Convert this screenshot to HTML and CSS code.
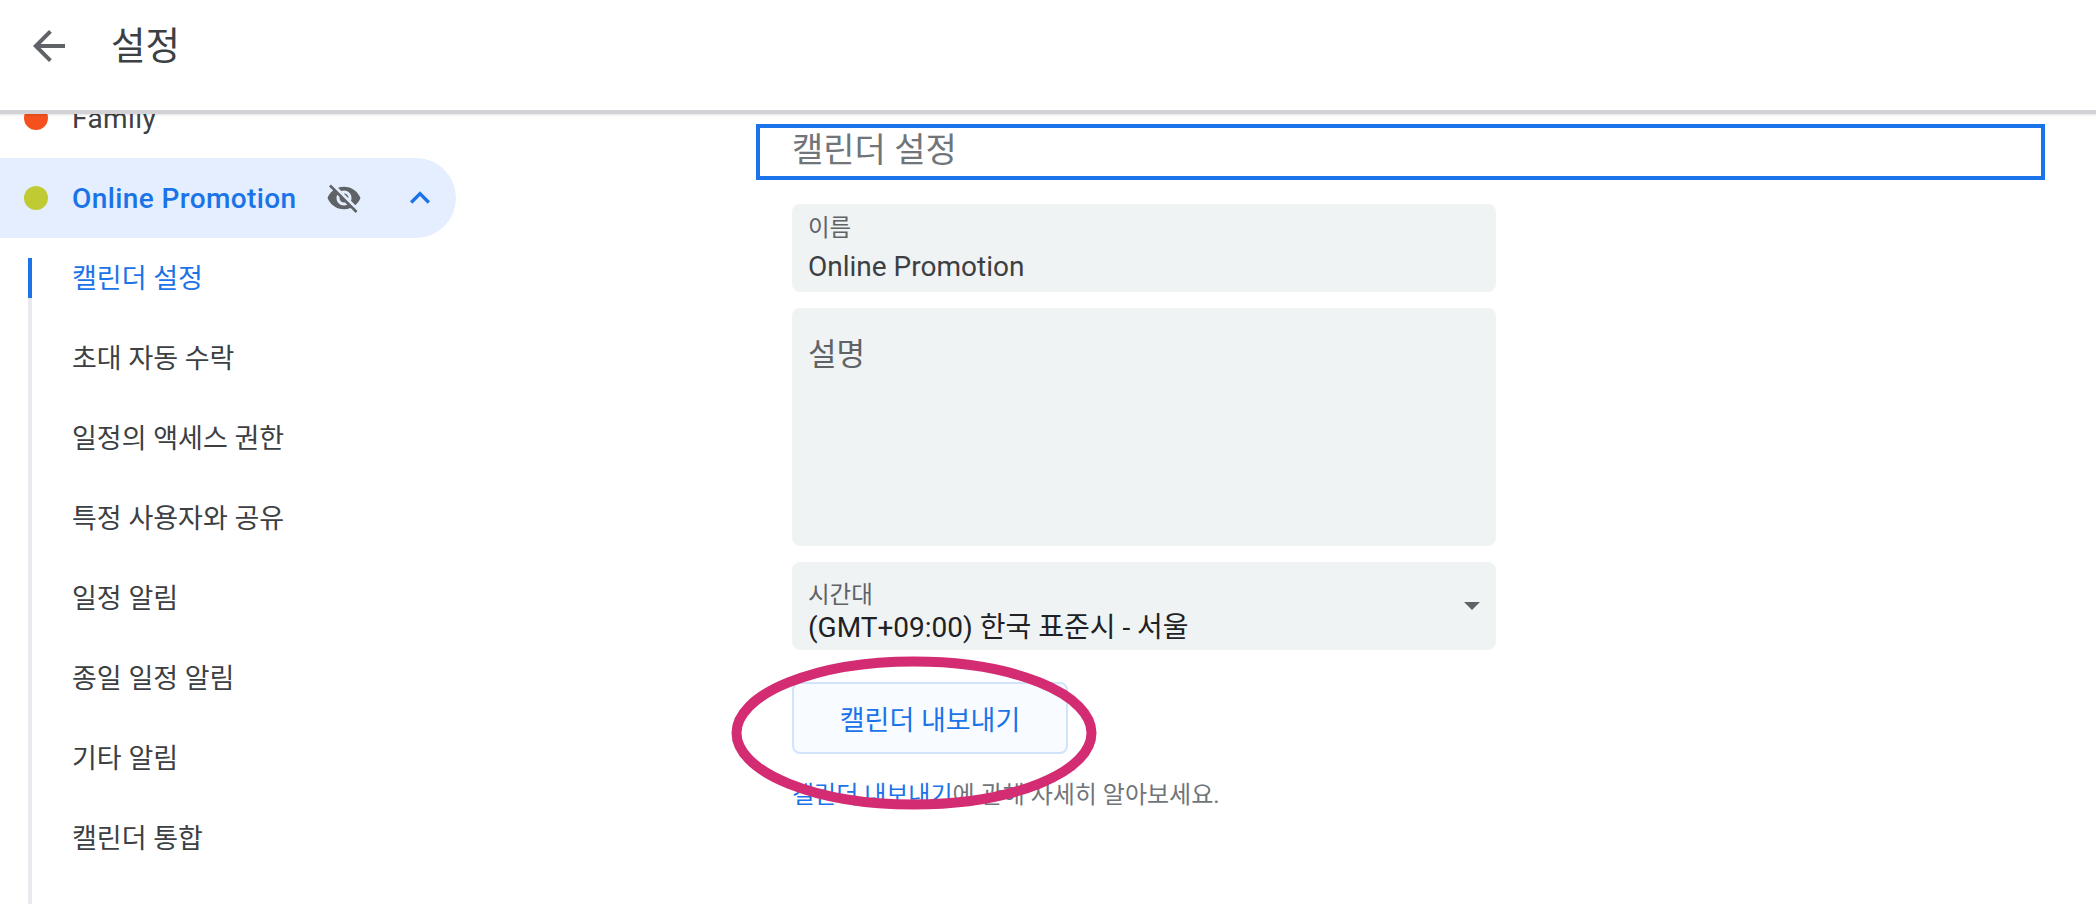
FILE: index.html
```html
<!DOCTYPE html>
<html lang="ko">
<head>
    <meta charset="utf-8">
    <title>설정</title>
    <link rel="stylesheet" href="styles.css">
</head>
<body>
    <div class="header">
        <svg class="back-icon" viewBox="0 0 24 24"><path d="M20 11H7.83l5.59-5.59L12 4l-8 8 8 8 1.41-1.41L7.83 13H20v-2z"/></svg>
        <h1>설정</h1>
    </div>

    <div class="content">
        <div class="sidebar">
            <div class="calendar-row">
                <span class="dot dot-family"></span>
                <span class="calendar-name">Family</span>
            </div>
            <div class="calendar-row active">
                <span class="dot dot-promo"></span>
                <span class="calendar-name">Online Promotion</span>
                <svg class="eye-icon" viewBox="0 0 24 24"><path d="M12 7c2.76 0 5 2.24 5 5 0 .65-.13 1.26-.36 1.83l2.92 2.92c1.51-1.26 2.7-2.89 3.43-4.75-1.73-4.39-6-7.5-11-7.5-1.4 0-2.74.25-3.98.7l2.16 2.16C10.74 7.13 11.35 7 12 7zM2 4.27l2.28 2.28.46.46C3.08 8.3 1.78 10.02 1 12c1.73 4.39 6 7.5 11 7.5 1.55 0 3.03-.3 4.38-.84l.42.42L19.73 22 21 20.73 3.27 3 2 4.27zM7.53 9.8l1.55 1.55c-.05.21-.08.43-.08.65 0 1.66 1.34 3 3 3 .22 0 .44-.03.65-.08l1.55 1.55c-.67.33-1.41.53-2.2.53-2.76 0-5-2.24-5-5 0-.79.2-1.53.53-2.2zm4.31-.78l3.15 3.15.02-.16c0-1.66-1.34-3-3-3l-.17.01z"/></svg>
                <svg class="chevron-icon" viewBox="0 0 24 24"><path d="M12 8l-6 6 1.41 1.41L12 10.83l4.59 4.58L18 14z"/></svg>
            </div>
            <div class="sub-list">
                <div class="sub-item current">캘린더 설정</div>
                <div class="sub-item">초대 자동 수락</div>
                <div class="sub-item">일정의 액세스 권한</div>
                <div class="sub-item">특정 사용자와 공유</div>
                <div class="sub-item">일정 알림</div>
                <div class="sub-item">종일 일정 알림</div>
                <div class="sub-item">기타 알림</div>
                <div class="sub-item">캘린더 통합</div>
            </div>
        </div>

        <div class="main">
            <h2 class="section-title">캘린더 설정</h2>
            <div class="fields">
                <div class="field">
                    <div class="field-label">이름</div>
                    <div class="field-value">Online Promotion</div>
                </div>
                <div class="field field-area">설명</div>
                <div class="field field-select">
                    <div class="field-label">시간대</div>
                    <div class="field-value">(GMT+09:00) 한국 표준시 - 서울</div>
                    <span class="caret"></span>
                </div>
                <button class="export-button">캘린더 내보내기</button>
                <p class="help-text"><a href="#">캘린더 내보내기</a>에 관해 자세히 알아보세요.</p>
            </div>
        </div>
    </div>

    <svg class="annotation" viewBox="0 0 380 170"><ellipse cx="189" cy="79" rx="177.5" ry="71.5"/></svg>
</body>
</html>
```

FILE: styles.css
```css
* { margin: 0; padding: 0; box-sizing: border-box; }
body { font-family: Roboto, 'Noto Sans CJK KR', sans-serif; background: #fff; color: #3c4043; width: 2096px; height: 904px; overflow: hidden; position: relative; }

.header { height: 114px; display: flex; align-items: flex-start; background: #fff; border-bottom: 4px solid #d3d3d7; box-shadow: 0 1px 2px rgba(0, 0, 0, 0.12); position: relative; z-index: 1; }
.back-icon { width: 48px; height: 48px; margin: 22px 0 0 25px; fill: #5f6368; flex-shrink: 0; }
.header h1 { font-size: 37.5px; font-weight: 400; line-height: 48px; margin: 22px 0 0 38px; }

.content { display: flex; height: 790px; overflow: hidden; }

.sidebar { width: 456px; flex-shrink: 0; margin-top: -36px; display: flex; flex-direction: column; }
.calendar-row { height: 80px; flex-shrink: 0; display: flex; align-items: center; padding: 0 16px 0 24px; font-size: 28px; letter-spacing: 0.4px; }
.calendar-row.active { background: #e4eefe; border-radius: 0 40px 40px 0; color: #1a73e8; font-weight: 500; }
.dot { width: 24px; height: 24px; border-radius: 50%; margin-right: 24px; flex-shrink: 0; }
.dot-family { background: #f4511e; }
.dot-promo { background: #c0ca33; }
.calendar-name { flex: 1; white-space: nowrap; }
.eye-icon { width: 36px; height: 36px; fill: #5f6368; margin-right: 38px; flex-shrink: 0; }
.chevron-icon { width: 40px; height: 40px; fill: #1a73e8; flex-shrink: 0; }

.sub-list { flex: 1; margin: 20px 0 0 28px; border-left: 4px solid #e8eaed; display: flex; flex-direction: column; gap: 40px; }
.sub-item { height: 40px; line-height: 42px; padding-left: 40px; font-size: 27px; white-space: nowrap; }
.sub-item.current { color: #1a73e8; margin-left: -4px; border-left: 4px solid #1a73e8; }

.main { flex: 1; padding: 10px 51px 0 300px; }
.section-title { height: 56px; border: 4px solid #1a73e8; padding-left: 32px; font-size: 34px; font-weight: 400; line-height: 44px; color: #70757a; }

.fields { width: 704px; margin: 24px 0 0 36px; display: flex; flex-direction: column; align-items: flex-start; }
.field { width: 100%; height: 88px; background: #f0f3f4; border-radius: 8px; padding: 10px 16px 0; position: relative; margin-bottom: 16px; }
.field-label { font-size: 23.5px; line-height: 28px; color: #5f6368; }
.field-value { font-size: 28px; line-height: 36px; margin-top: 7px; white-space: nowrap; }
.field-area { height: 238px; padding-top: 26px; font-size: 31px; line-height: 42px; color: #5f6368; }
.field-select { padding-top: 19px; margin-bottom: 32px; }
.field-select .field-value { color: #202124; margin-top: 1px; }
.caret { position: absolute; right: 16px; top: 40px; border-left: 8px solid transparent; border-right: 8px solid transparent; border-top: 8px solid #5f6368; }

.export-button { width: 276px; height: 72px; background: #f8fbff; border: 2px solid #d2e3fc; border-radius: 8px; color: #1a73e8; font-family: inherit; font-size: 27px; }
.help-text { font-size: 24px; line-height: 34px; margin-top: 24px; color: #70757a; white-space: nowrap; }
.help-text a { color: #1a73e8; text-decoration: none; }

.annotation { position: absolute; left: 725px; top: 654px; width: 380px; height: 170px; z-index: 2; }
.annotation ellipse { fill: none; stroke: #d32c73; stroke-width: 10px; }
```
